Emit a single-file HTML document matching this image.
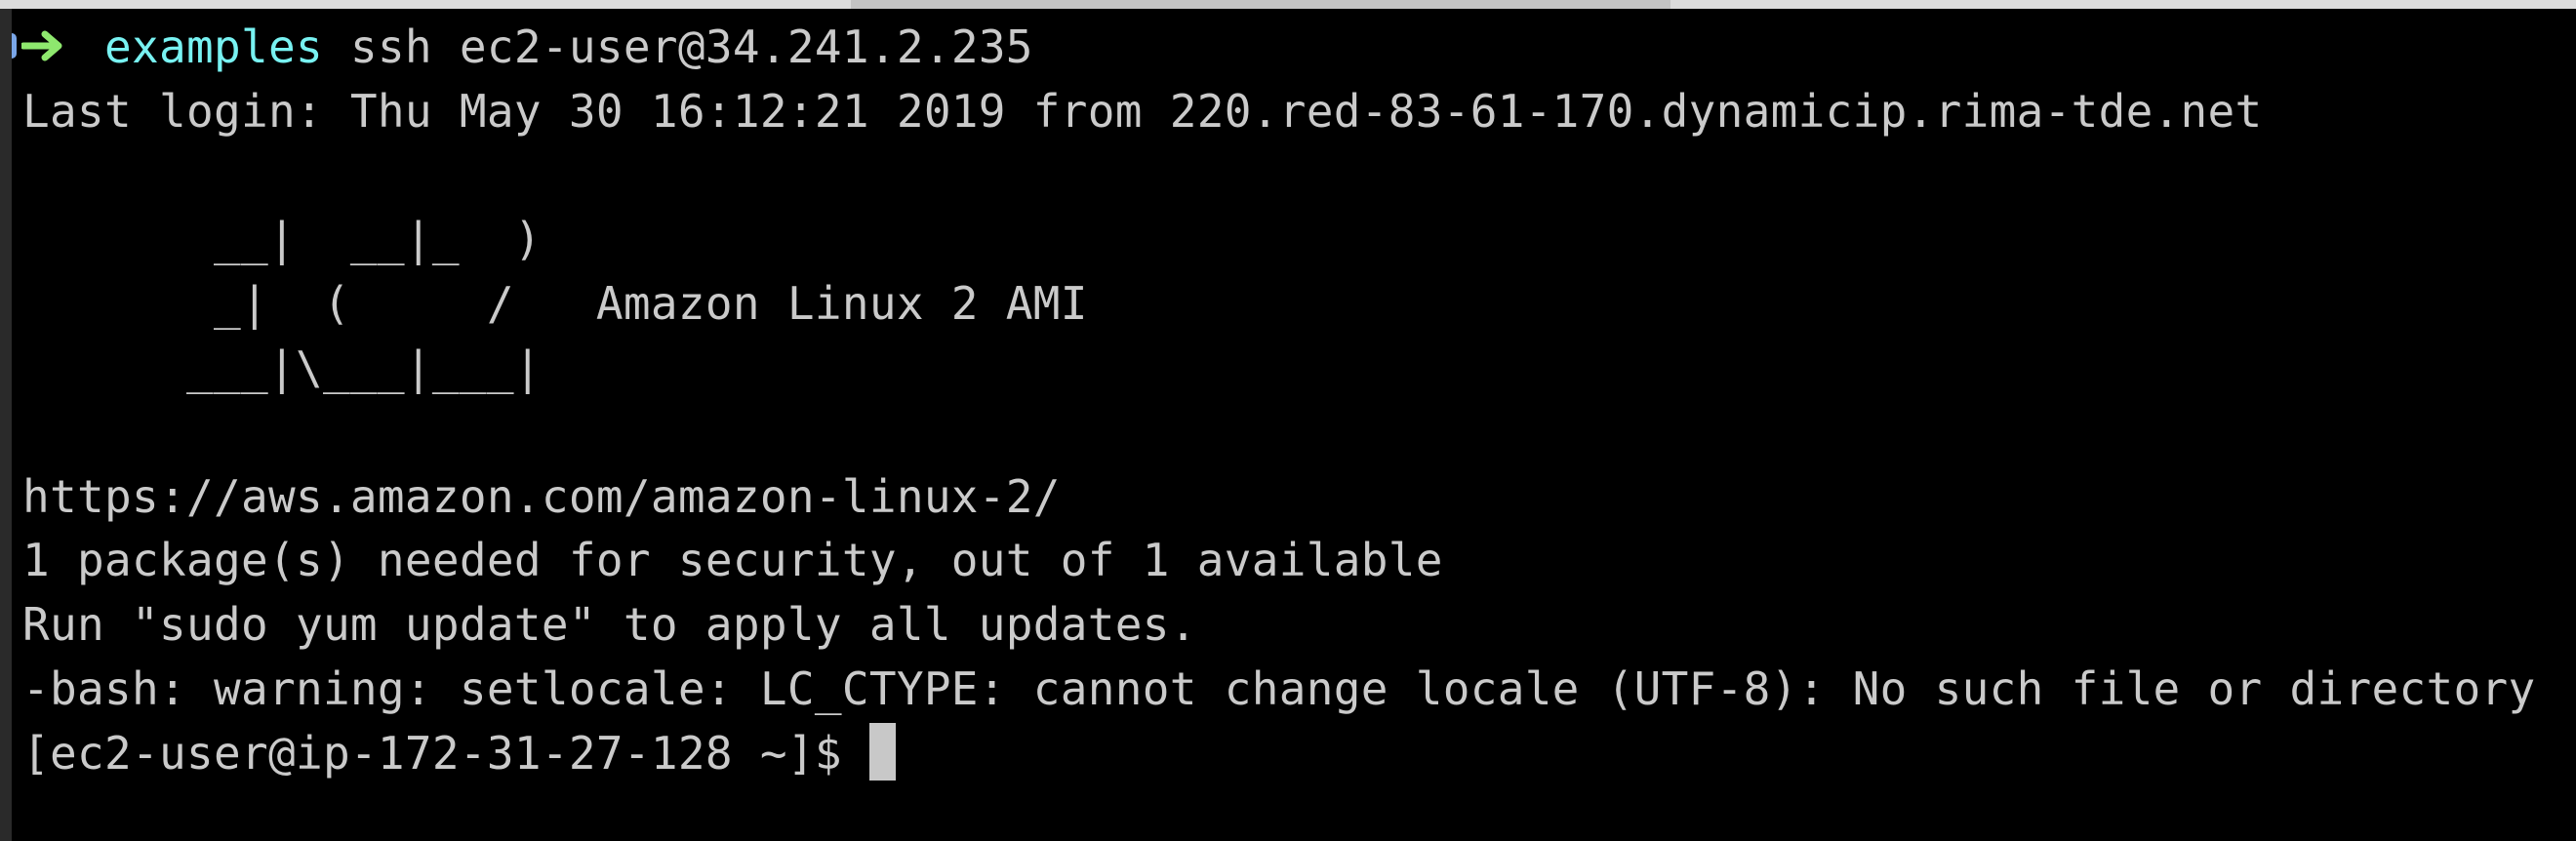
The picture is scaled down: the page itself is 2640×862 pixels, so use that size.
<!DOCTYPE html>
<html><head><meta charset="utf-8"><style>
html,body{margin:0;padding:0;background:#000;width:2640px;height:862px;overflow:hidden}
.bar{position:absolute;left:0;top:0;width:2640px;height:9px;background:#dcdcdc}
.bar .m{position:absolute;left:872px;top:0;width:840px;height:9px;background:#c4c4c4}
.strip{position:absolute;left:0;top:9px;width:12px;height:853px;background:#2a2a2a}
.blue{position:absolute;left:12px;top:34px;width:5px;height:26px;background:#7aa6e8;border-radius:0 6px 6px 0}
.arrow{position:absolute;left:22px;top:30px}
pre{position:absolute;left:23px;top:16px;margin:0;font-family:"DejaVu Sans Mono","Liberation Mono",monospace;font-size:46px;line-height:65.8px;color:#cacaca;letter-spacing:0.3px}
.c{color:#78f2f2}
.cur{display:inline-block;width:27px;height:59px;background:#c8c8c8;vertical-align:-12px}
</style></head><body>
<div class="bar"><div class="m"></div></div>
<div class="strip"></div>
<div class="blue"></div>
<svg class="arrow" width="44" height="34" viewBox="0 0 44 34"><path d="M2 17 H36 M24 5 L38 17 L24 29" fill="none" stroke="#8ee86e" stroke-width="7" stroke-linecap="round" stroke-linejoin="round"/></svg>
<pre>   <span class="c">examples</span> ssh ec2-user@34.241.2.235
Last login: Thu May 30 16:12:21 2019 from 220.red-83-61-170.dynamicip.rima-tde.net

       __|  __|_  )
       _|  (     /   Amazon Linux 2 AMI
      ___|\___|___|

https://aws.amazon.com/amazon-linux-2/
1 package(s) needed for security, out of 1 available
Run "sudo yum update" to apply all updates.
-bash: warning: setlocale: LC_CTYPE: cannot change locale (UTF-8): No such file or directory
[ec2-user@ip-172-31-27-128 ~]$ <span class="cur"></span></pre>
</body></html>
